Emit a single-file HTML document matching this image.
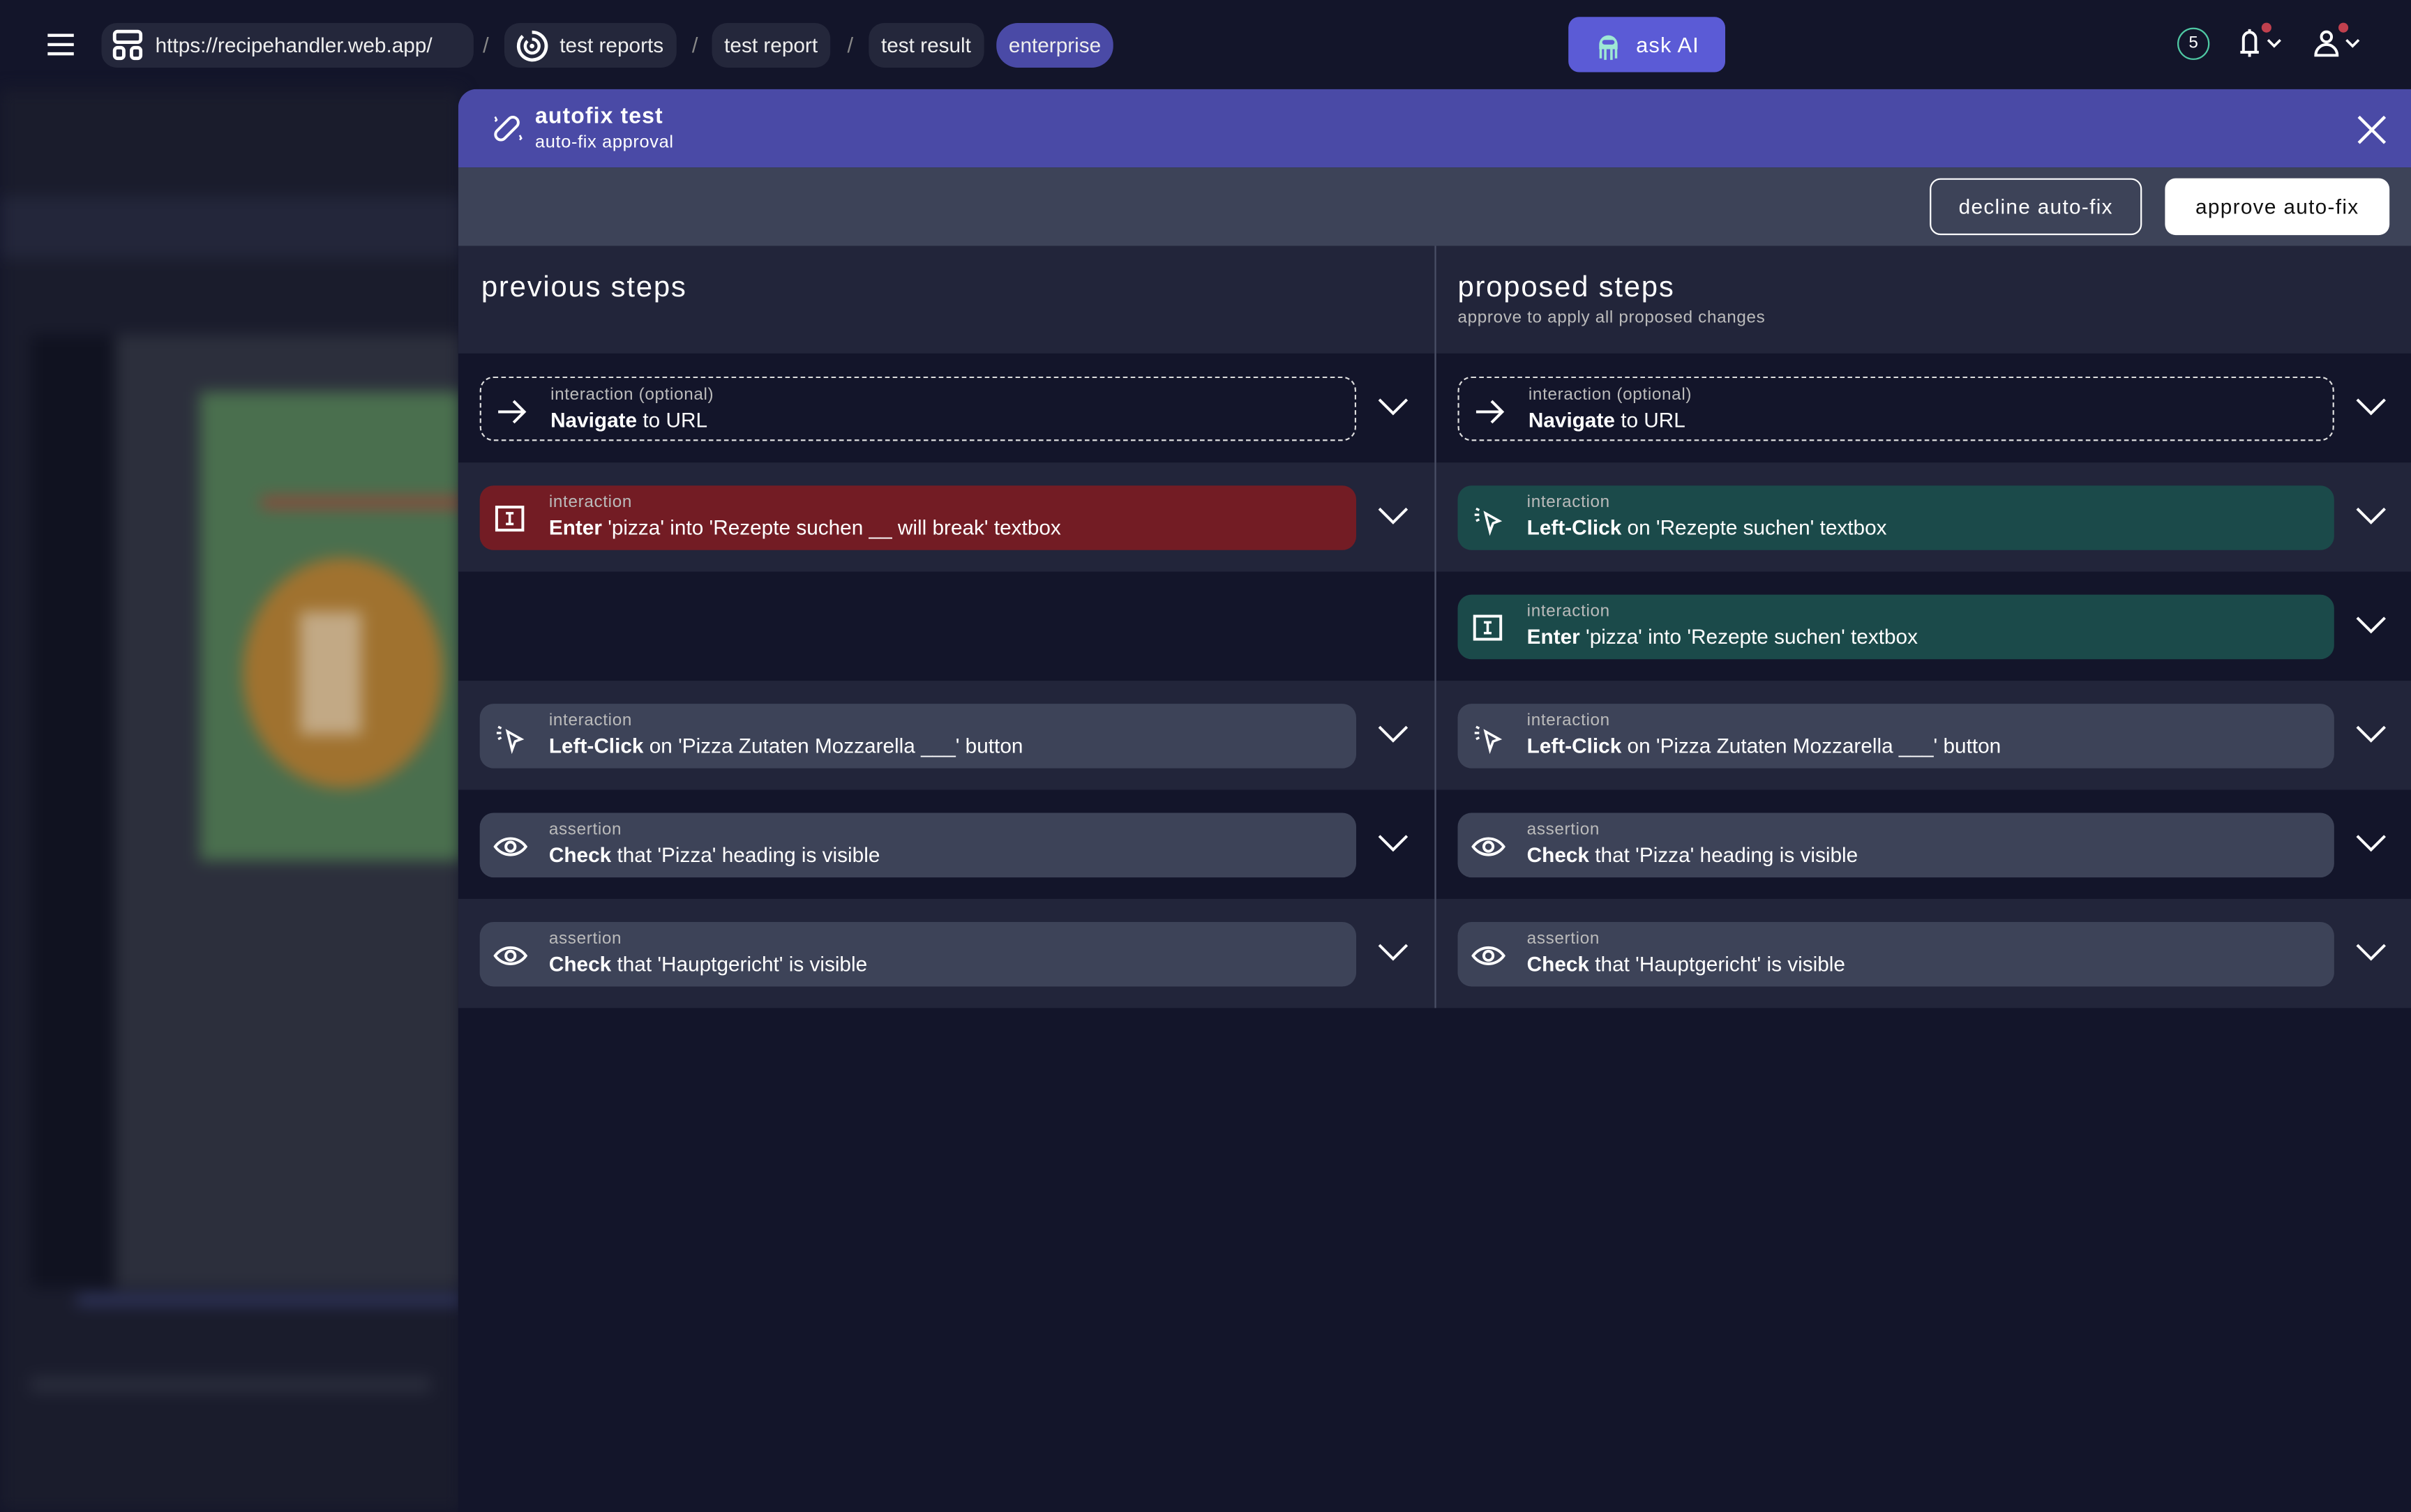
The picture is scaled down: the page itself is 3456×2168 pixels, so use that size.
<!DOCTYPE html>
<html><head><meta charset="utf-8"><style>
*{box-sizing:border-box;margin:0;padding:0}
html,body{width:3456px;height:2168px;overflow:hidden;background:#13152a}
#s{position:absolute;left:0;top:0;width:1568px;height:984px;transform:scale(2.2041,2.2033);transform-origin:0 0;font-family:"Liberation Sans",sans-serif;color:#fff;background:#13152a}
.a{position:absolute}
.pill{position:absolute;top:15px;height:29px;border-radius:10px;background:#24273b;font-size:13.5px;line-height:29px;padding:0 8px;color:#eee}
.sl{position:absolute;top:15px;line-height:29px;color:#888;font-size:14px}
.row{position:absolute;height:71px;width:635px}
.card{position:absolute;top:15px;left:14px;width:570px;height:42px;border-radius:9px;background:#3d4358}
.card .l{position:absolute;left:45px;top:5px;font-size:11px;color:#bbb;letter-spacing:.3px}
.card .t{position:absolute;left:45px;top:20px;font-size:13.5px;color:#fff}
.card .t b{font-weight:bold}
.card svg{position:absolute;left:9px;top:11px}
.chev{position:absolute;left:598px;top:29px}
.dash{background:#13152a;border:1.3px dashed #ddd}
.red{background:#731c24}
.grn{background:#1b4a4a}
</style></head><body><div id="s">
<div class="a" style="left:0;top:58px;width:300px;height:926px;background:#1a1c2c;filter:blur(5px);overflow:hidden">
 <div class="a" style="left:0;top:70px;width:300px;height:40px;background:#23263a"></div>
 <div class="a" style="left:20px;top:160px;width:55px;height:620px;background:#101220"></div>
 <div class="a" style="left:75px;top:160px;width:225px;height:620px;background:#2c2f3c"></div>
 <div class="a" style="left:130px;top:197px;width:170px;height:305px;background:#4a6f4e"></div>
 <div class="a" style="left:158px;top:305px;width:130px;height:150px;border-radius:50%;background:#a0722f"></div>
 <div class="a" style="left:195px;top:340px;width:40px;height:80px;background:#d8cfc0;opacity:.6"></div>
 <div class="a" style="left:170px;top:265px;width:130px;height:8px;background:#8a4a3c"></div>
 <div class="a" style="left:50px;top:785px;width:250px;height:6px;background:#343a66"></div>
 <div class="a" style="left:20px;top:838px;width:260px;height:10px;background:#2a2d3c"></div>
</div>
<svg class="a" style="left:30px;top:21px" width="20" height="16"><path d="M1 2h17M1 8h17M1 14h17" stroke="#fff" stroke-width="2"/></svg>
<div class="pill" style="left:66px;width:242px;padding-left:35px">https://recipehandler.web.app/</div>
<svg class="a" style="left:73px;top:19px" width="20" height="21"><rect x="1.5" y="1.5" width="17" height="7" rx="2" fill="none" stroke="#fff" stroke-width="2.2"/><rect x="1.5" y="12" width="6" height="7" rx="2" fill="none" stroke="#fff" stroke-width="2.2"/><rect x="12.5" y="12" width="6" height="7" rx="2" fill="none" stroke="#fff" stroke-width="2.2"/></svg>
<div class="sl" style="left:314px">/</div>
<div class="pill" style="left:328px;padding-left:36px">test reports</div>
<svg class="a" style="left:335px;top:19px" width="22" height="22"><path d="M11 2a9 9 0 1 1-6 2.5" fill="none" stroke="#fff" stroke-width="2.2"/><path d="M11 6.5a4.5 4.5 0 1 1-3 1.2" fill="none" stroke="#fff" stroke-width="2"/><circle cx="11" cy="11" r="1.5" fill="#fff"/></svg>
<div class="sl" style="left:450px">/</div>
<div class="pill" style="left:463px">test report</div>
<div class="sl" style="left:551px">/</div>
<div class="pill" style="left:565px">test result</div>
<div class="pill" style="left:648px;background:#4a4aa6;border-radius:14px">enterprise</div>
<div class="a" style="left:1020px;top:11px;width:102px;height:36px;border-radius:7px;background:#5b5bd6;font-size:14px;line-height:36px;padding-left:44px;letter-spacing:.5px">ask AI</div>
<svg class="a" style="left:1035px;top:19px" width="22" height="22"><path d="M5 10a6 6 0 0 1 12 0v3H5z" fill="#9ee8d4"/><rect x="7" y="7" width="8" height="3" rx="1.5" fill="#5b5bd6"/><path d="M6 13v6M9 13v7M13 13v7M16 13v6" stroke="#9ee8d4" stroke-width="1.6" fill="none"/></svg>
<div class="a" style="left:1416px;top:18px;width:21px;height:21px;border-radius:50%;border:1.6px solid #4fc9a4;font-size:11px;text-align:center;line-height:18px">5</div>
<svg class="a" style="left:1454px;top:14px" width="36" height="26"><path d="M5 20V11a4 4 0 0 1 8 0v9zM3 20h12M9 20v3M9 5v2" stroke="#fff" stroke-width="1.8" fill="none"/><circle cx="20" cy="4" r="3.2" fill="#c0404e"/><path d="M21 12l4 4 4-4" stroke="#fff" stroke-width="1.6" fill="none"/></svg>
<svg class="a" style="left:1504px;top:14px" width="36" height="26"><circle cx="9" cy="10" r="3.3" stroke="#fff" stroke-width="1.8" fill="none"/><path d="M2 22a7 7 0 0 1 14 0z" stroke="#fff" stroke-width="1.8" fill="none"/><circle cx="20" cy="4" r="3.2" fill="#c0404e"/><path d="M22 12l4 4 4-4" stroke="#fff" stroke-width="1.6" fill="none"/></svg>
<div class="a" style="left:298px;top:58px;width:1270px;height:926px;background:#13152a;border-top-left-radius:12px;overflow:hidden">
 <div class="a" style="left:0;top:0;width:1270px;height:51px;background:#4a4aa6"></div>
 <svg class="a" style="left:21px;top:15px" width="22" height="22"><rect x="7" y="2" width="7" height="18" rx="3.5" transform="rotate(45 11 11)" fill="none" stroke="#fff" stroke-width="1.8"/><path d="M3 3l1 2-1 1M19 15l1 2-1 1" stroke="#fff" stroke-width="1.2" fill="none"/></svg>
 <div class="a" style="left:50px;top:10px;font-size:14.5px;font-weight:bold;letter-spacing:.5px">autofix test</div>
 <div class="a" style="left:50px;top:29px;font-size:11.5px;letter-spacing:.3px">auto-fix approval</div>
 <svg class="a" style="left:1235px;top:17px" width="19" height="19"><path d="M1 1l17 17M18 1L1 18" stroke="#fff" stroke-width="2"/></svg>
 <div class="a" style="left:0;top:51px;width:1270px;height:51px;background:#3d4358"></div>
 <div class="a" style="left:957px;top:58px;width:138px;height:37px;border:1.3px solid #fff;border-radius:7px;font-size:13.5px;line-height:35px;text-align:center;letter-spacing:.6px">decline auto-fix</div>
 <div class="a" style="left:1110px;top:58px;width:146px;height:37px;background:#fff;border-radius:7px;font-size:13.5px;line-height:37px;text-align:center;color:#111;letter-spacing:.6px">approve auto-fix</div>
 <div class="a" style="left:0;top:102px;width:1270px;height:70px;background:#22253a"></div>
 <div class="a" style="left:15px;top:119px;font-size:19px;letter-spacing:.8px">previous steps</div>
 <div class="a" style="left:650px;top:119px;font-size:19px;letter-spacing:.8px">proposed steps</div>
 <div class="a" style="left:650px;top:143px;font-size:11px;color:#bbb;letter-spacing:.3px">approve to apply all proposed changes</div>
 <div class="a" style="left:635px;top:102px;width:1px;height:496px;background:#4a4f66"></div>
</div>
<div class="a" style="left:298px;top:230px;width:1270px">
 <div class="a" style="left:0;top:71px;width:1270px;height:71px;background:#22253a"></div>
 <div class="a" style="left:0;top:213px;width:1270px;height:71px;background:#22253a"></div>
 <div class="a" style="left:0;top:355px;width:1270px;height:71px;background:#22253a"></div>
 <div class="a" style="left:635px;top:0;width:1px;height:426px;background:#4a4f66"></div>
</div>
<svg width="0" height="0" style="position:absolute"><defs>
<g id="arr"><path d="M2 11h17M12 4l7 7-7 7" stroke="#fff" stroke-width="1.8" fill="none"/></g>
<g id="tb"><rect x="2" y="3" width="17" height="15" stroke="#fff" stroke-width="1.8" fill="none"/><path d="M8 7h5M8 14h5M10.5 7v7" stroke="#fff" stroke-width="1.6"/></g>
<g id="cl"><path d="M9 7l9 5-4 1.5L12 19z" stroke="#fff" stroke-width="1.6" fill="none"/><path d="M3 4l2 1M2 8h3M3 12l2-1" stroke="#fff" stroke-width="1.5"/></g>
<g id="eye"><path d="M1 11c5-7 15-7 20 0-5 7-15 7-20 0z" stroke="#fff" stroke-width="1.8" fill="none"/><circle cx="11" cy="11" r="3" stroke="#fff" stroke-width="1.8" fill="none"/></g>
<g id="cv"><path d="M1 1l9 9 9-9" stroke="#fff" stroke-width="1.8" fill="none"/></g>
</defs></svg>
<div class="a" style="left:298px;top:230px;width:1270px">
 <div class="row" style="left:0;top:0"><div class="card dash"><svg width="22" height="22"><use href="#arr"/></svg><div class="l">interaction (optional)</div><div class="t"><b>Navigate</b> to URL</div></div><svg class="chev" width="20" height="12"><use href="#cv"/></svg></div>
 <div class="row" style="left:0;top:71px"><div class="card red"><svg width="22" height="22"><use href="#tb"/></svg><div class="l">interaction</div><div class="t"><b>Enter</b> 'pizza' into 'Rezepte suchen __ will break' textbox</div></div><svg class="chev" width="20" height="12"><use href="#cv"/></svg></div>
 <div class="row" style="left:0;top:213px"><div class="card"><svg width="22" height="22"><use href="#cl"/></svg><div class="l">interaction</div><div class="t"><b>Left-Click</b> on 'Pizza Zutaten Mozzarella ___' button</div></div><svg class="chev" width="20" height="12"><use href="#cv"/></svg></div>
 <div class="row" style="left:0;top:284px"><div class="card"><svg width="22" height="22"><use href="#eye"/></svg><div class="l">assertion</div><div class="t"><b>Check</b> that 'Pizza' heading is visible</div></div><svg class="chev" width="20" height="12"><use href="#cv"/></svg></div>
 <div class="row" style="left:0;top:355px"><div class="card"><svg width="22" height="22"><use href="#eye"/></svg><div class="l">assertion</div><div class="t"><b>Check</b> that 'Hauptgericht' is visible</div></div><svg class="chev" width="20" height="12"><use href="#cv"/></svg></div>
 <div class="row" style="left:636px;top:0"><div class="card dash"><svg width="22" height="22"><use href="#arr"/></svg><div class="l">interaction (optional)</div><div class="t"><b>Navigate</b> to URL</div></div><svg class="chev" width="20" height="12"><use href="#cv"/></svg></div>
 <div class="row" style="left:636px;top:71px"><div class="card grn"><svg width="22" height="22"><use href="#cl"/></svg><div class="l">interaction</div><div class="t"><b>Left-Click</b> on 'Rezepte suchen' textbox</div></div><svg class="chev" width="20" height="12"><use href="#cv"/></svg></div>
 <div class="row" style="left:636px;top:142px"><div class="card grn"><svg width="22" height="22"><use href="#tb"/></svg><div class="l">interaction</div><div class="t"><b>Enter</b> 'pizza' into 'Rezepte suchen' textbox</div></div><svg class="chev" width="20" height="12"><use href="#cv"/></svg></div>
 <div class="row" style="left:636px;top:213px"><div class="card"><svg width="22" height="22"><use href="#cl"/></svg><div class="l">interaction</div><div class="t"><b>Left-Click</b> on 'Pizza Zutaten Mozzarella ___' button</div></div><svg class="chev" width="20" height="12"><use href="#cv"/></svg></div>
 <div class="row" style="left:636px;top:284px"><div class="card"><svg width="22" height="22"><use href="#eye"/></svg><div class="l">assertion</div><div class="t"><b>Check</b> that 'Pizza' heading is visible</div></div><svg class="chev" width="20" height="12"><use href="#cv"/></svg></div>
 <div class="row" style="left:636px;top:355px"><div class="card"><svg width="22" height="22"><use href="#eye"/></svg><div class="l">assertion</div><div class="t"><b>Check</b> that 'Hauptgericht' is visible</div></div><svg class="chev" width="20" height="12"><use href="#cv"/></svg></div>
</div>
</div></body></html>
